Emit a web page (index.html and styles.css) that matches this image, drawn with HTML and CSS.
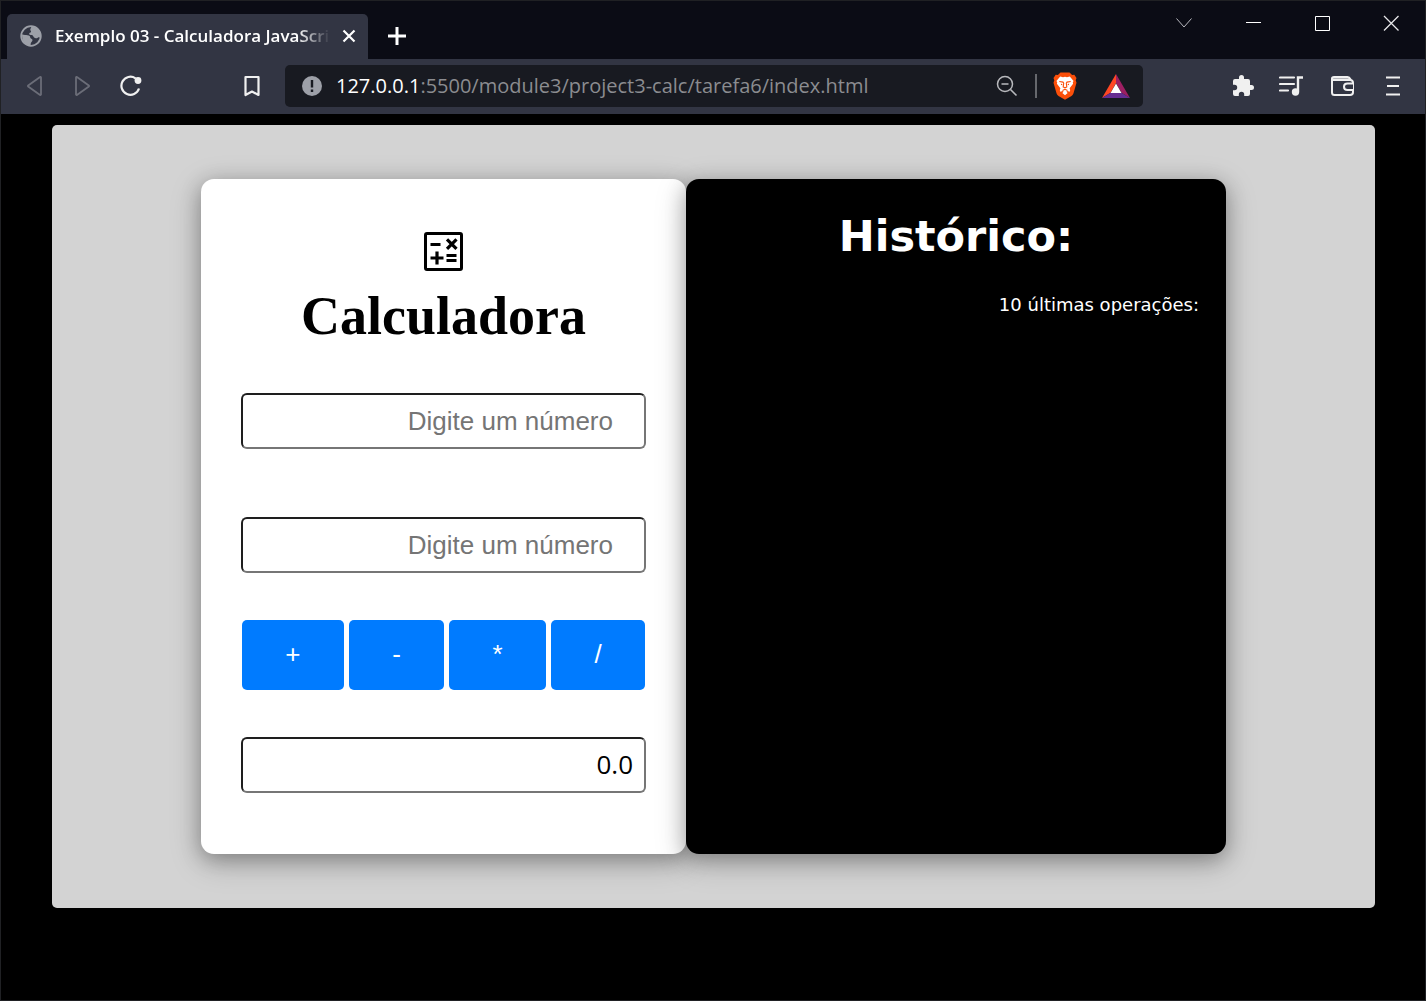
FILE: index.html
```html
<!DOCTYPE html>
<html lang="pt-BR">
<head>
<meta charset="utf-8">
<meta name="viewport" content="width=device-width, initial-scale=1">
<title>Exemplo 03 - Calculadora JavaScript</title>
<link rel="stylesheet" href="styles.css">
</head>
<body>
<div class="window">
  <header class="titlebar">
    <div class="tab">
      <svg class="icon" width="22" height="22" viewBox="0 0 22 22" aria-hidden="true">
        <circle cx="11" cy="11" r="9.8" fill="none" stroke="#9da0a8" stroke-width="1.8"/>
        <path d="M11.500 1.500C17 1.500 21 5.500 21 11c0 .8-.1 1.400-.3 2-1-.9-2-1-3-.3-1.200.9-2.800.7-3.800-.4-.8-.9-.9-2-2.300-2.200-1.400-.2-2.400 0-2.400-1.300 0-1.200 1.300-1 1.800-1.700.5-.8-.4-1.300-.7-2.200-.2-.9.700-1.700 1.200-3.400z" fill="#9da0a8"/>
        <path d="M2 9.500c2.500.2 3.500.6 5.500.8 2 .2 2.800 1.100 2.800 2.400 0 1.100 2.200.8 2.200 2.400 0 1.700-1.500 1.900-1.700 3.200-.1.900-.1 1.500-.3 2.200C5.500 20.300 2 17 2 9.500z" fill="#9da0a8"/>
      </svg>
      <span class="tab-title">Exemplo 03 - Calculadora JavaScri</span>
      <button class="tab-close" aria-label="Fechar guia">
        <svg width="14" height="14" viewBox="0 0 14 14"><path d="M1.500 1.500l11 11M12.500 1.500l-11 11" stroke="#fff" stroke-width="2.200"/></svg>
      </button>
    </div>
    <button class="tab-new" aria-label="Nova guia">
      <svg width="18" height="18" viewBox="0 0 18 18"><path d="M9 0v18M0 9h18" stroke="#fff" stroke-width="3"/></svg>
    </button>
    <div class="window-controls">
      <button aria-label="Pesquisar guias"><svg width="16" height="16" viewBox="0 0 16 16"><path d="M.5 3.500L8 12l7.500-8.500" fill="none" stroke="#b9b9bf"/></svg></button>
      <button aria-label="Minimizar"><svg width="16" height="16" viewBox="0 0 16 16"><path d="M1 7.500h15" stroke="#fff"/></svg></button>
      <button aria-label="Maximizar"><svg width="16" height="16" viewBox="0 0 16 16"><path d="M1.500 1.500h14v14h-14z" fill="none" stroke="#fff"/></svg></button>
      <button aria-label="Fechar"><svg width="16" height="16" viewBox="0 0 16 16"><path d="M1 1l14.500 14.500M15.500 1L1 15.500" stroke="#e6e6e8" stroke-width="1.300"/></svg></button>
    </div>
  </header>

  <nav class="toolbar" aria-label="Navegação">
    <button class="tool" aria-label="Voltar"><svg width="22" height="22" viewBox="0 0 22 22"><path d="M17 2.500v17a.8.8 0 0 1-1.300.3L4.200 11.600a.8.8 0 0 1 0-1.200L15.700 2.200a.8.8 0 0 1 1.300.3z" fill="none" stroke="#6b6d78" stroke-width="1.800"/></svg></button>
    <button class="tool" aria-label="Avançar"><svg width="22" height="22" viewBox="0 0 22 22"><path d="M4 2.500v17a.8.8 0 0 0 1.300.3l11.500-8.200a.8.8 0 0 0 0-1.200L5.300 2.200A.8.8 0 0 0 4 2.500z" fill="none" stroke="#6b6d78" stroke-width="1.800"/></svg></button>
    <button class="tool" aria-label="Recarregar"><svg width="22" height="22" viewBox="0 0 22 22"><path d="M15.500 3.300A9 9 0 1 0 19 13.500" fill="none" stroke="#f0f0f0" stroke-width="2.200"/><circle cx="18" cy="5.500" r="3.400" fill="#f0f0f0"/></svg></button>
    <button class="tool bookmark" aria-label="Favoritos"><svg width="22" height="22" viewBox="0 0 22 22"><path d="M4.500 2h13v18L11 16.500 4.500 20z" fill="none" stroke="#f0f0f0" stroke-width="2.200" stroke-linejoin="round"/></svg></button>
    <div class="address">
      <svg class="icon" width="20" height="20" viewBox="0 0 20 20" aria-hidden="true"><circle cx="10" cy="10" r="10" fill="#9da0a8"/><path d="M10 4v7.500M10 13.500V16" stroke="#181a21" stroke-width="2.400"/></svg>
      <span class="url"><span class="host">127.0.0.1</span>:5500/module3/project3-calc/tarefa6/index.html</span>
      <button class="zoom" aria-label="Zoom"><svg width="22" height="22" viewBox="0 0 22 22"><circle cx="9" cy="9" r="7.500" fill="none" stroke="#b8b9bd" stroke-width="1.500"/><path d="M5.500 9h7M14.500 14.500l6 6" stroke="#b8b9bd" stroke-width="1.600"/></svg></button>
      <span class="divider"></span>
      <button class="shield" aria-label="Brave Shields"><svg width="24" height="28" viewBox="0 0 24 28">
        <path d="M7.500.5h9l2.600 2.600 2.200-.3 2.200 3.200-.8 2.200.8 2.500-3 10.500c-.3 1.100-1 2-2 2.700L12 27.800l-6.500-3.900c-1-.7-1.700-1.600-2-2.700L.5 10.700l.8-2.500L.5 6l2.200-3.200 2.200.3z" fill="#fb4f0a"/>
        <path d="M12 4.800l2 .4 2.800-.6L20.600 9l-.8 1.200.3 1.600-3.500 4.500.6 2-.5 1.400-2.500-.8-.8.8 1.300 1.300L12 23.200 9.300 21l1.300-1.300-.8-.8-2.500.8-.5-1.400.6-2-3.500-4.500.3-1.600L3.400 9l3.800-4.400 2.800.6z" fill="#fff"/>
        <path d="M6.300 9.500l3.700.6.700 1-.5 3.800 1.800.9 1.800-.9-.5-3.800.7-1 3.700-.6M8 12.300l1.200.3M16 12.300l-1.200.3M9.500 18.600l2.500-1.300 2.500 1.300" fill="none" stroke="#fb4f0a" stroke-width="1.100"/>
      </svg></button>
      <button class="rewards" aria-label="Brave Rewards"><svg width="28" height="24" viewBox="0 0 28 24">
        <path d="M14 0L0 24l8.500-5.200L14 9z" fill="#ff4724"/><path d="M14 0l14 24-8.500-5.200L14 9z" fill="#9e1f63"/><path d="M0 24l8.500-5.200h11L28 24z" fill="#662d91"/><path d="M14 9.500l5.500 9.500h-11z" fill="#fff"/>
      </svg></button>
    </div>
    <div class="extras">
      <button class="tool" aria-label="Extensões"><svg width="24" height="24" viewBox="0 0 24 24"><path d="M20.500 11H19V7a2 2 0 0 0-2-2h-4V3.500a2.500 2.500 0 0 0-5 0V5H4a2 2 0 0 0-2 2v3.800h1.500a2.700 2.700 0 0 1 0 5.400H2V20a2 2 0 0 0 2 2h3.800v-1.500a2.700 2.700 0 0 1 5.400 0V22H17a2 2 0 0 0 2-2v-4h1.500a2.500 2.500 0 0 0 0-5z" fill="#f0f0f0"/></svg></button>
      <button class="tool" aria-label="Mídia"><svg width="28" height="24" viewBox="0 0 28 24"><path d="M1 3.500h14M1 10h14M1 16.500h8" stroke="#f0f0f0" stroke-width="2.200" stroke-linecap="round"/><path d="M19 17.500V3.500h5" fill="none" stroke="#f0f0f0" stroke-width="2.400"/><circle cx="16.500" cy="18" r="3.700" fill="#f0f0f0"/></svg></button>
      <button class="tool" aria-label="Carteira"><svg width="26" height="24" viewBox="0 0 26 24"><path d="M2 6V4.500C2 3.500 3 3 4 3h13.500c1 0 2.500 1 3 3z" fill="#b4b5ba"/><path d="M2 6h18c1.700 0 3 1.200 3 2.800v9.400c0 1.700-1.300 2.800-3 2.800H4.500C3 21 2 20 2 18.500V4.500C2 3.500 3 3 4 3h13.500c1 0 2.500 1.300 3.500 3" fill="none" stroke="#f0f0f0" stroke-width="2"/><path d="M23 9.500h-5.500c-2 0-3.500 1.200-3.500 3.200s1.500 3.300 3.500 3.300H23" fill="#323543" stroke="#f0f0f0" stroke-width="2"/></svg></button>
      <button class="tool" aria-label="Menu"><svg width="16" height="22" viewBox="0 0 16 22"><path d="M1 2.500h14M2 11h12M1 19.500h14" stroke="#f0f0f0" stroke-width="2"/></svg></button>
    </div>
  </nav>

  <main class="page">
    <div class="container">
      <section class="card calculator">
        <svg class="calc-icon" width="39" height="39" viewBox="0 0 39 39" aria-hidden="true">
          <rect x="1.500" y="1.500" width="36" height="36" rx="1.500" fill="none" stroke="#000" stroke-width="3"/>
          <path d="M6.500 12.500h10M23 7.300l9.500 9.500M32.500 7.300L23 16.800M6.500 26h13M13 19.500v13M22.500 23.500h10M22.500 28.500h10" stroke="#000" stroke-width="3.200"/>
        </svg>
        <h1>Calculadora</h1>
        <form class="calc-form">
          <input class="field" type="text" inputmode="decimal" placeholder="Digite um número" aria-label="Primeiro número">
          <input class="field second" type="text" inputmode="decimal" placeholder="Digite um número" aria-label="Segundo número">
          <div class="operators">
            <button type="button">+</button>
            <button type="button">-</button>
            <button type="button">*</button>
            <button type="button">/</button>
          </div>
          <input class="field result" type="text" value="0.0" readonly aria-label="Resultado">
        </form>
      </section>
      <section class="card history">
        <h2>Histórico:</h2>
        <p>10 últimas operações:</p>
      </section>
    </div>
  </main>
</div>
</body>
</html>
```
FILE: styles.css
```css
* {
  box-sizing: border-box;
}

body {
  margin: 0;
  background: #000;
  font-family: "Open Sans", "Noto Sans", sans-serif;
}

button {
  display: flex;
  align-items: center;
  justify-content: center;
  padding: 0;
  border: 0;
  background: none;
}

.window {
  min-height: 100vh;
  border: 1px solid #202124;
}

.icon {
  flex: none;
}

/* Title bar */
.titlebar {
  display: flex;
  height: 58px;
  padding-left: 6px;
  background: #0b0c15;
}

.tab {
  display: flex;
  align-items: center;
  width: 361px;
  margin-top: 13px;
  padding: 0 12px 2px 13px;
  border-radius: 5px 5px 0 0;
  background: #323543;
}

.tab-title {
  flex: 1;
  min-width: 0;
  margin-left: 13px;
  color: #fff;
  font-size: 17px;
  font-weight: 600;
  white-space: nowrap;
  mask-image: linear-gradient(to right, #000 88%, transparent);
}

.tab-close {
  margin-left: 12px;
}

.tab-new {
  width: 58px;
  margin-top: 13px;
  padding-bottom: 2px;
}

.window-controls {
  display: flex;
  height: 44px;
  margin-left: auto;
}

.window-controls button {
  width: 69px;
}

/* Toolbar */
.toolbar {
  display: flex;
  align-items: center;
  height: 55px;
  padding: 0 8px 2px 10px;
  background: #323543;
}

.tool {
  width: 48px;
  height: 42px;
}

.bookmark {
  margin: 0 9px 0 73px;
}

.address {
  display: flex;
  flex: 1;
  align-items: center;
  min-width: 0;
  height: 42px;
  padding: 0 13px 0 17px;
  border-radius: 5px;
  background: #181a21;
}

.url {
  flex: 1;
  min-width: 0;
  margin-left: 14px;
  color: #8b8c90;
  font-size: 20px;
  white-space: nowrap;
}

.host {
  color: #fff;
}

.divider {
  width: 2px;
  height: 24px;
  margin: 0 16px 0 17px;
  background: #66686d;
}

.rewards {
  margin-left: 25px;
}

.extras {
  display: flex;
  gap: 2px;
  margin-left: 76px;
}

/* Page */
.page {
  padding: 11px 50px 11px 51px;
}

.container {
  display: grid;
  grid-template-columns: minmax(0, 485px) minmax(0, 540px);
  justify-content: center;
  padding: 54px 20px;
  border-radius: 5px;
  background: #d3d3d3;
}

.card {
  border-radius: 13px;
  box-shadow: 0 5px 20px rgba(0, 0, 0, 0.25), 0 8px 32px rgba(0, 0, 0, 0.22);
}

.calculator {
  padding: 53px 40px 61px;
  background: #fff;
  text-align: center;
}

.calc-icon {
  display: block;
  margin: 0 auto;
}

h1 {
  margin: 14px 0 46px;
  font: bold 54px/62px "Liberation Serif", "Times New Roman", serif;
}

.calc-form {
  display: flex;
  flex-direction: column;
}

.field {
  width: 100%;
  height: 56px;
  padding: 0 31px;
  border: 2px solid;
  border-color: #1e1e1e #767676 #767676 #1e1e1e;
  border-radius: 6px;
  background: #fff;
  font: 26px "Liberation Sans", Arial, sans-serif;
  text-align: right;
}

.field::placeholder {
  color: #757575;
}

.second {
  margin-top: 68px;
}

.operators {
  display: flex;
  gap: 5px;
  margin: 47px 1px;
}

.operators button {
  flex: 1 1 auto;
  height: 70px;
  padding-bottom: 2px;
  border-radius: 5px;
  background: #007bff;
  color: #fff;
  font: 26px "Liberation Sans", Arial, sans-serif;
}

.result {
  padding: 0 11px 2px;
  font-family: "Open Sans", "Noto Sans", sans-serif;
}

.history {
  padding: 30px 27px;
  background: #000;
  color: #fff;
  font-family: Verdana, "DejaVu Sans", sans-serif;
}

h2 {
  margin: 0 0 31px;
  font-size: 43px;
  line-height: 54px;
  text-align: center;
}

.history p {
  margin: 0;
  font-size: 18px;
  line-height: 22px;
  text-align: right;
}
```
